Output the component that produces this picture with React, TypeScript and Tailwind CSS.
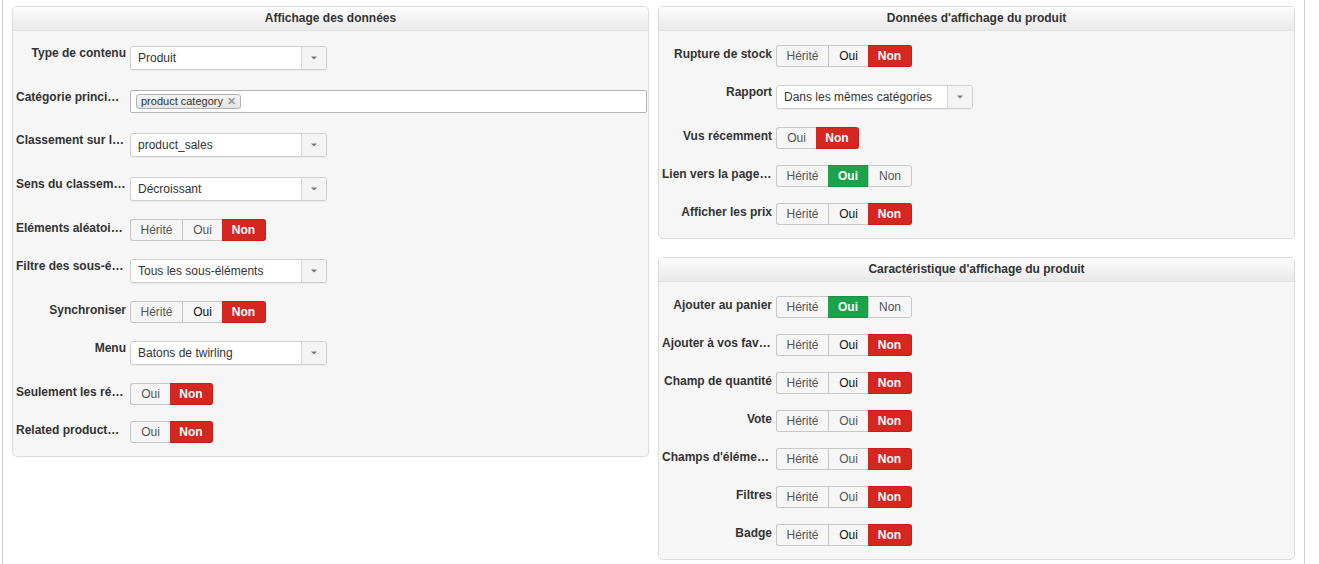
import React from "react";

type Opt = { text: string; w: string; on?: "red" | "green"; dark?: boolean };

type Row =
  | { label: string; kind: "select"; value: string }
  | { label: string; kind: "tags"; tag: string }
  | { label: string; kind: "toggle"; opts: Opt[] };

const tri = (sel: "herite" | "oui" | "non", dark = false): Opt[] => [
  { text: "Hérité", w: "w-[52px]", on: sel === "herite" ? "green" : undefined },
  { text: "Oui", w: "w-[40px]", on: sel === "oui" ? "green" : undefined, dark },
  { text: "Non", w: "w-[44px]", on: sel === "non" ? "red" : undefined },
];

const duo = (sel: "oui" | "non"): Opt[] => [
  { text: "Oui", w: "w-[40px]", on: sel === "oui" ? "green" : undefined },
  { text: "Non", w: "w-[43px]", on: sel === "non" ? "red" : undefined },
];

const leftRows: Row[] = [
  { label: "Type de contenu", kind: "select", value: "Produit" },
  { label: "Catégorie principale", kind: "tags", tag: "product category" },
  { label: "Classement sur la liste", kind: "select", value: "product_sales" },
  { label: "Sens du classement", kind: "select", value: "Décroissant" },
  { label: "Eléments aléatoires", kind: "toggle", opts: tri("non") },
  { label: "Filtre des sous-éléments", kind: "select", value: "Tous les sous-éléments" },
  { label: "Synchroniser", kind: "toggle", opts: tri("non", true) },
  { label: "Menu", kind: "select", value: "Batons de twirling" },
  { label: "Seulement les résultats", kind: "toggle", opts: duo("non") },
  { label: "Related products only", kind: "toggle", opts: duo("non") },
];

const displayRows: Row[] = [
  { label: "Rupture de stock", kind: "toggle", opts: tri("non", true) },
  { label: "Rapport", kind: "select", value: "Dans les mêmes catégories" },
  { label: "Vus récemment", kind: "toggle", opts: duo("non") },
  { label: "Lien vers la page produit", kind: "toggle", opts: tri("oui") },
  { label: "Afficher les prix", kind: "toggle", opts: tri("non", true) },
];

const featureRows: Row[] = [
  { label: "Ajouter au panier", kind: "toggle", opts: tri("oui") },
  { label: "Ajouter à vos favoris", kind: "toggle", opts: tri("non", true) },
  { label: "Champ de quantité", kind: "toggle", opts: tri("non", true) },
  { label: "Vote", kind: "toggle", opts: tri("non") },
  { label: "Champs d'éléments", kind: "toggle", opts: tri("non") },
  { label: "Filtres", kind: "toggle", opts: tri("non") },
  { label: "Badge", kind: "toggle", opts: tri("non", true) },
];

function Select({ value }: { value: string }) {
  return (
    <div className="my-[2px] flex h-[24px] w-[197px] overflow-hidden rounded-[3px] border border-[#cfcfcf] bg-white shadow-[0_1px_1px_rgba(0,0,0,0.05)]">
      <div className="flex flex-1 items-center truncate px-[7px] text-[12px] text-[#333]">{value}</div>
      <div className="flex w-[25px] items-center justify-center border-l border-[#d6d6d6] bg-[#f4f4f4]">
        <svg width="6" height="4" viewBox="0 0 6 4">
          <path d="M0 0.5 L6 0.5 L3 3.5 Z" fill="#777" />
        </svg>
      </div>
    </div>
  );
}

function Tags({ tag }: { tag: string }) {
  return (
    <div className="my-[2px] flex h-[23px] flex-1 items-center rounded-[2px] border border-[#b5b5b5] bg-white px-[5px]">
      <span className="flex h-[15px] items-center gap-[4px] rounded-[3px] border border-[#b0b0b0] bg-gradient-to-b from-[#f6f6f6] to-[#e4e4e4] px-[4px] text-[11px] leading-none text-[#333]">
        {tag}
        <span className="text-[11px] font-bold text-[#999]">✕</span>
      </span>
    </div>
  );
}

function Toggle({ opts }: { opts: Opt[] }) {
  return (
    <div className="flex h-[22px]">
      {opts.map((o, i) => {
        const first = i === 0;
        const last = i === opts.length - 1;
        const base = `${o.w} flex items-center justify-center text-[12px] ${first ? "rounded-l-[3px] border-l" : ""} ${last ? "rounded-r-[3px] border-r" : ""}`;
        if (o.on === "red")
          return (
            <div key={o.text} className={`${base} border-y border-[#c42019] bg-[#d5261f] font-bold text-white`}>
              {o.text}
            </div>
          );
        if (o.on === "green")
          return (
            <div key={o.text} className={`${base} border-y border-[#179042] bg-[#1ca24b] font-bold text-white`}>
              {o.text}
            </div>
          );
        return (
          <div
            key={o.text}
            className={`${base} border-y border-[#c8c8c8] bg-[#f6f6f6] ${!first ? "border-l" : ""} ${o.dark ? "font-medium text-[#111]" : "text-[#555]"}`}
          >
            {o.text}
          </div>
        );
      })}
    </div>
  );
}

function FormRow({ row }: { row: Row }) {
  return (
    <div className="flex items-start gap-[4px] pr-[1px]">
      <div className="w-[110px] shrink-0 truncate text-right text-[12px] font-bold leading-[18px] text-[#333]">
        {row.label}
      </div>
      {row.kind === "select" && <Select value={row.value} />}
      {row.kind === "tags" && <Tags tag={row.tag} />}
      {row.kind === "toggle" && <Toggle opts={row.opts} />}
    </div>
  );
}

function Panel({ title, rows, top }: { title: string; rows: Row[]; top: string }) {
  return (
    <div className="overflow-hidden rounded-[5px] border border-[#dcdcdc] bg-[#f6f6f6]">
      <div className="h-[24px] border-b border-[#e2e2e2] bg-gradient-to-b from-[#fdfdfd] to-[#e9e9e9] text-center text-[12px] font-bold leading-[23px] text-[#333]">
        {title}
      </div>
      <div className={`flex flex-col gap-[16px] pb-[13px] pl-[3px] ${top}`}>
        {rows.map((r) => (
          <FormRow key={r.label} row={r} />
        ))}
      </div>
    </div>
  );
}

export default function App() {
  return (
    <div className="h-[564px] w-full overflow-hidden bg-white font-['Liberation_Sans',Arial,sans-serif]">
      <div className="ml-[2px] flex h-full w-[1303px] gap-[9px] border-x border-[#cfcfcf] pl-[9px] pt-[6px]">
        <div className="w-[637px]">
          <Panel title="Affichage des données" rows={leftRows} top="pt-[13px]" />
        </div>
        <div className="flex w-[637px] flex-col gap-[18px]">
          <Panel title="Données d'affichage du produit" rows={displayRows} top="pt-[14px]" />
          <Panel title="Caractéristique d'affichage du produit" rows={featureRows} top="pt-[14px]" />
        </div>
      </div>
    </div>
  );
}
